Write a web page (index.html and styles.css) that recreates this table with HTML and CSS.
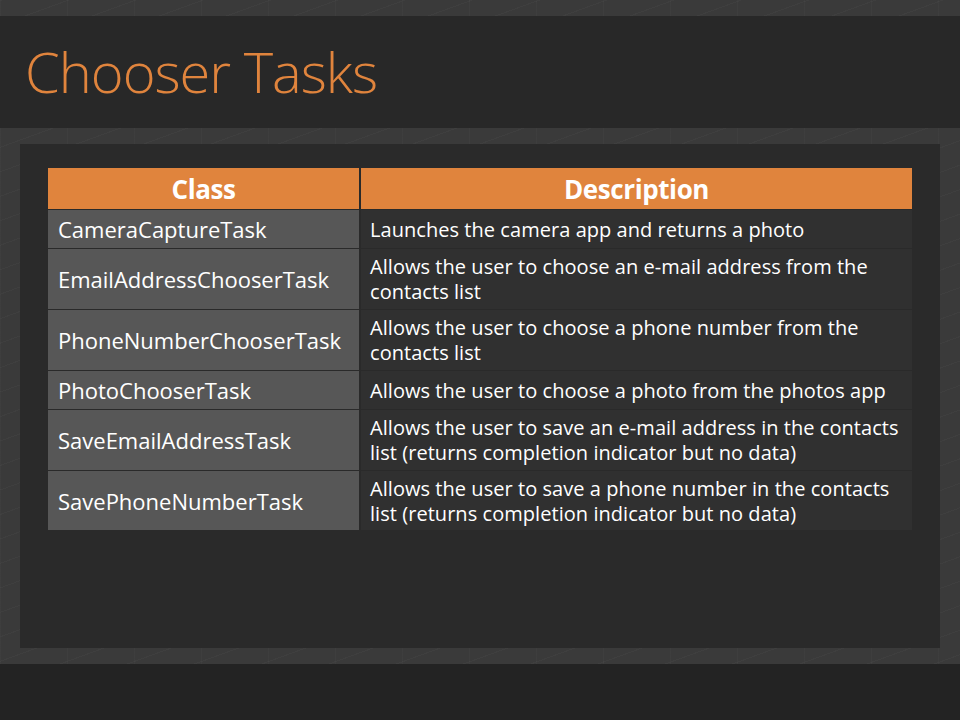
FILE: index.html
```html
<!DOCTYPE html>
<html lang="en">
<head>
<meta charset="utf-8">
<title>Chooser Tasks</title>
<link rel="stylesheet" href="styles.css">
</head>
<body>
<div class="slide">
  <header class="titlebar">
    <h1 class="title">Chooser Tasks</h1>
  </header>
  <main class="panel">
    <div class="table">
      <div class="th">Class</div>
      <div class="th">Description</div>

      <div class="cls">CameraCaptureTask</div>
      <div class="desc"><span>Launches the camera app and returns a photo</span></div>

      <div class="cls tall">EmailAddressChooserTask</div>
      <div class="desc tall"><span>Allows the user to choose an e-mail address from the<br>contacts list</span></div>

      <div class="cls tall">PhoneNumberChooserTask</div>
      <div class="desc tall"><span>Allows the user to choose a phone number from the<br>contacts list</span></div>

      <div class="cls">PhotoChooserTask</div>
      <div class="desc"><span>Allows the user to choose a photo from the photos app</span></div>

      <div class="cls tall">SaveEmailAddressTask</div>
      <div class="desc tall"><span>Allows the user to save an e-mail address in the contacts<br>list (returns completion indicator but no data)</span></div>

      <div class="cls tall last">SavePhoneNumberTask</div>
      <div class="desc tall last"><span>Allows the user to save a phone number in the contacts<br>list (returns completion indicator but no data)</span></div>
    </div>
  </main>
  <footer class="footer"></footer>
</div>
</body>
</html>
```

FILE: styles.css
```css
html, body {
  margin: 0;
  padding: 0;
}
body {
  background: #3a3a3a;
  font-family: "Open Sans", "Noto Sans", sans-serif;
}
.slide {
  width: 960px;
  height: 720px;
  display: flex;
  flex-direction: column;
  background:
    repeating-linear-gradient(160deg, rgba(255,255,255,0.025) 0 1px, transparent 1px 23px),
    repeating-linear-gradient(90deg, rgba(255,255,255,0.02) 0 1px, transparent 1px 67px),
    #3a3a3a;
  overflow: hidden;
}
.titlebar {
  margin-top: 16px;
  height: 112px;
  background: #282828;
  display: flex;
  align-items: center;
  padding-left: 25px;
  box-sizing: border-box;
}
.title {
  margin: 0;
  font-weight: 300;
  font-size: 56px;
  color: #e0843d;
  letter-spacing: -1px;
  line-height: 1;
  padding-bottom: 2px;
}
.panel {
  margin: 16px 20px 0 20px;
  height: 504px;
  background: #2a2a2a;
  padding: 24px 28px 0 28px;
  box-sizing: border-box;
}
.table {
  display: grid;
  grid-template-columns: 311px 1fr;
  column-gap: 2px;
  row-gap: 1px;
  background: #2a2a2a;
}
.th {
  height: 41px;
  background: #e0843d;
  color: #ffffff;
  font-weight: 700;
  font-size: 26px;
  display: flex;
  align-items: center;
  justify-content: center;
  letter-spacing: -0.4px;
}
.cls, .desc {
  height: 38px;
  display: flex;
  align-items: center;
  box-sizing: border-box;
  color: #ffffff;
}
.tall { height: 60px; }
.last { height: 59px; }
.cls {
  background: #575757;
  padding-left: 10px;
  font-size: 22px;
  letter-spacing: 0;
}
.desc {
  background: #303030;
  padding-left: 9px;
  padding-right: 2px;
  font-size: 20px;
  line-height: 25px;
  letter-spacing: 0.05px;
  white-space: nowrap;
}
.footer {
  margin-top: 16px;
  flex: 1;
  background: #232323;
}
```
